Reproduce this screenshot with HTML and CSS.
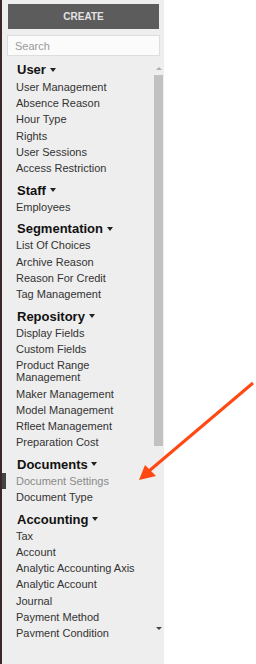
FILE: index.html
```html
<!DOCTYPE html>
<html lang="en">
<head>
  <meta charset="UTF-8"/>
  <title>Settings menu</title>
  <link rel="stylesheet" href="styles.css">
</head>
<body>
<div class="sidebar">
  <button type="button" class="create-btn">CREATE</button>
  <input type="text" class="search" placeholder="Search">

  <div class="menu-wrap">
    <div class="menu">
      <div class="menu-head">User <span class="caret"></span></div>
      <a class="menu-item">User Management</a>
      <a class="menu-item">Absence Reason</a>
      <a class="menu-item">Hour Type</a>
      <a class="menu-item">Rights</a>
      <a class="menu-item">User Sessions</a>
      <a class="menu-item">Access Restriction</a>

      <div class="menu-head">Staff <span class="caret"></span></div>
      <a class="menu-item">Employees</a>

      <div class="menu-head">Segmentation <span class="caret"></span></div>
      <a class="menu-item">List Of Choices</a>
      <a class="menu-item">Archive Reason</a>
      <a class="menu-item">Reason For Credit</a>
      <a class="menu-item">Tag Management</a>

      <div class="menu-head">Repository <span class="caret"></span></div>
      <a class="menu-item">Display Fields</a>
      <a class="menu-item">Custom Fields</a>
      <a class="menu-item">Product Range Management</a>
      <a class="menu-item">Maker Management</a>
      <a class="menu-item">Model Management</a>
      <a class="menu-item">Rfleet Management</a>
      <a class="menu-item">Preparation Cost</a>

      <div class="menu-head">Documents <span class="caret"></span></div>
      <a class="menu-item active">Document Settings</a>
      <a class="menu-item">Document Type</a>

      <div class="menu-head">Accounting <span class="caret"></span></div>
      <a class="menu-item">Tax</a>
      <a class="menu-item">Account</a>
      <a class="menu-item">Analytic Accounting Axis</a>
      <a class="menu-item">Analytic Account</a>
      <a class="menu-item">Journal</a>
      <a class="menu-item">Payment Method</a>
      <a class="menu-item">Payment Condition</a>
    </div>

    <!-- scrollbar of the menu list -->
    <div class="vscroll">
      <div class="sb-btn"><span class="sb-up"></span></div>
      <div class="sb-thumb"></div>
      <div class="sb-btn sb-end"><span class="sb-down"></span></div>
    </div>
  </div>
</div>

<!-- annotation arrow pointing at the selected entry -->
<svg class="pointer" width="256" height="664" viewBox="0 0 256 664">
  <line x1="253" y1="383" x2="149" y2="471" stroke="#ff4812" stroke-width="3"/>
  <polygon points="139,480 145,465 156,476" fill="#ff4812"/>
</svg>
</body>
</html>
```

FILE: styles.css
```css
body { margin:0; background:#fff; font-family:'Liberation Sans', Arial, sans-serif; }
.sidebar { width:162px; height:664px; background:#eeeeee; border-left:2px solid #3a2828; display:flex; flex-direction:column; }
.create-btn { margin:4px 5px 0 6px; height:25px; border:none; background:#5c5c5c; color:#e2e2e2; font-family:inherit; font-size:10px; font-weight:bold; cursor:pointer; }
.search { margin:6px 4px 0 5px; height:21px; box-sizing:border-box; border:1px solid #dddddd; background:#fbfbfb; padding:0 7px; font-family:inherit; font-size:11px; color:#333; outline:none; }
.search::placeholder { color:#9a9a9a; }

.menu-wrap { margin-top:6px; height:575px; display:flex; }
.menu { flex:1; overflow:hidden; padding-top:1px; }
.menu-head { font-size:13px; font-weight:bold; color:#111; line-height:14px; padding-left:15px; margin:7.5px 0 1px; }
.menu-head:first-child { margin:0 0 2px; }
.caret { display:inline-block; vertical-align:middle; margin-top:-2px; border-left:3px solid transparent; border-right:3px solid transparent; border-top:4px solid #222; }
.menu-item { display:block; font-size:11px; color:#333; line-height:12.2px; padding:2px 4px 2px 14px; cursor:pointer; }
.menu-item.active { color:#8a8a8a; border-left:4px solid #444; padding-left:10px; }

.vscroll { width:10px; display:flex; flex-direction:column; }
.sb-btn { height:13px; display:flex; align-items:center; justify-content:center; }
.sb-end { margin-top:auto; height:18px; }
.sb-up { border-left:3px solid transparent; border-right:3px solid transparent; border-bottom:3px solid #b0b0b0; }
.sb-down { border-left:3px solid transparent; border-right:3px solid transparent; border-top:3px solid #444; }
.sb-thumb { height:371px; width:9px; background:#c1c1c1; }

.pointer { position:absolute; left:0; top:0; pointer-events:none; }
```
